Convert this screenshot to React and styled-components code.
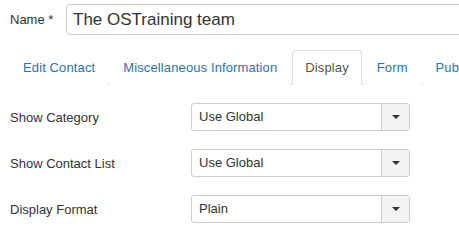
import React from 'react'
import styled, { createGlobalStyle } from 'styled-components'

const GlobalStyle = createGlobalStyle`
    body {
        margin: 0;
        background: #fff;
        font-family: "Liberation Sans", Arial, sans-serif;
        font-size: 13px;
        color: #333;
    }
`

const Page = styled.div`
    width: 459px;
    height: 234px;
    overflow: hidden;
`

// Name row
const NameRow = styled.div`
    display: flex;
    align-items: center;
    padding: 4px 0 0 10px;
`

const NameLabel = styled.label`
    width: 56px;
    font-size: 13px;
    color: #333;
`

const NameInput = styled.div`
    flex: 1;
    height: 29px;
    margin-right: -10px;
    border: 1px solid #ccc;
    border-radius: 4px;
    padding: 0 6px;
    font-size: 17px;
    line-height: 29px;
    color: #333;
    white-space: nowrap;
`

// Tabs
const Tabs = styled.ul`
    display: flex;
    list-style: none;
    margin: 15px 0 0 10px;
    padding: 0;
    border-bottom: 1px solid #ddd;
    white-space: nowrap;
`

const Tab = styled.li`
    margin-right: 2px;
    margin-bottom: -1px;
    padding: 8px 12px 7px;
    line-height: 18px;
    font-size: 13px;
    letter-spacing: 0.12px;
    border: 1px solid ${p => p.$active ? '#ddd' : 'transparent'};
    border-bottom-color: ${p => p.$active ? '#fff' : 'transparent'};
    border-radius: 4px 4px 0 0;
    background: #fff;
    color: ${p => p.$active ? '#555' : '#3071a9'};
`

// Options
const Options = styled.div`
    display: flex;
    flex-direction: column;
    gap: 18px;
    padding: 18px 0 0 10px;
`

const Row = styled.div`
    display: flex;
    align-items: center;
`

const RowLabel = styled.label`
    width: 181px;
    font-size: 13px;
    color: #333;
`

const Select = styled.div`
    display: flex;
    width: 219px;
    height: 28px;
    box-sizing: border-box;
    border: 1px solid #ccc;
    border-radius: 3px;
    overflow: hidden;
`

const SelectValue = styled.div`
    flex: 1;
    padding-left: 7px;
    line-height: 26px;
    font-size: 13px;
    color: #333;
`

const SelectButton = styled.div`
    width: 27px;
    display: flex;
    align-items: center;
    justify-content: center;
    border-left: 1px solid #ccc;
    background: #f3f3f3;
`

const Caret = styled.span`
    width: 0;
    height: 0;
    border-left: 4px solid transparent;
    border-right: 4px solid transparent;
    border-top: 4px solid #333;
`

const options = [
    { label: 'Show Category', value: 'Use Global' },
    { label: 'Show Contact List', value: 'Use Global' },
    { label: 'Display Format', value: 'Plain' },
]

const tabs = ['Edit Contact', 'Miscellaneous Information', 'Display', 'Form', 'Publishing']

const App = () => {
    return (
        <Page>
            <GlobalStyle />
            <NameRow>
                <NameLabel>Name *</NameLabel>
                <NameInput>The OSTraining team</NameInput>
            </NameRow>
            <Tabs>
                {tabs.map(t => (
                    <Tab key={t} $active={t === 'Display'}>{t}</Tab>
                ))}
            </Tabs>
            <Options>
                {options.map(o => (
                    <Row key={o.label}>
                        <RowLabel>{o.label}</RowLabel>
                        <Select>
                            <SelectValue>{o.value}</SelectValue>
                            <SelectButton><Caret /></SelectButton>
                        </Select>
                    </Row>
                ))}
            </Options>
        </Page>
    )
}

export default App
